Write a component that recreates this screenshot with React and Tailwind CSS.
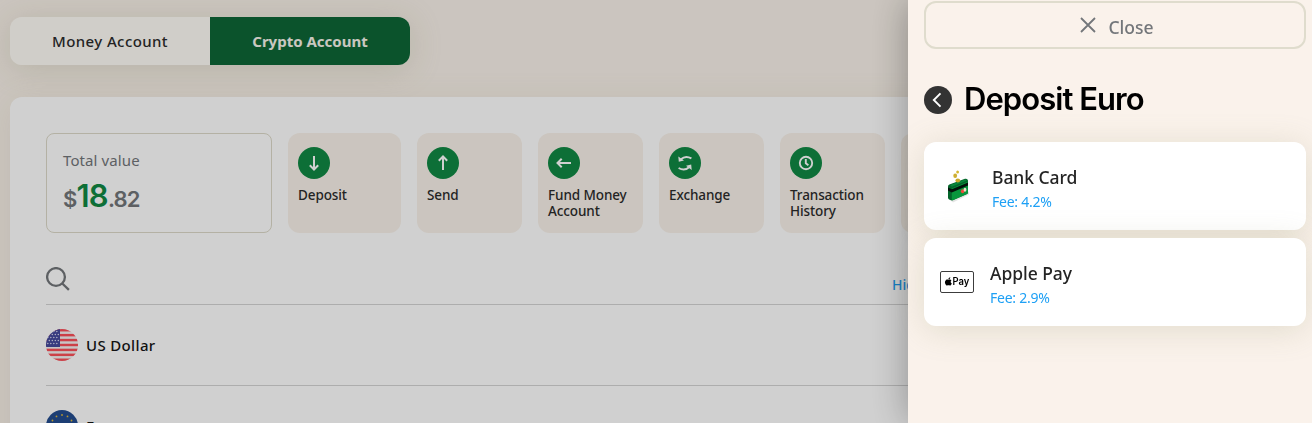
import React from 'react';

const CircleArrow = ({ rotate = '' }) => (
  <svg className={`w-8 h-8 ${rotate}`} viewBox="0 0 32 32" fill="none" stroke="#fff" strokeWidth="2">
    <path d="M16 9v13.5M11.8 18.3l4.2 4.2 4.2-4.2" />
  </svg>
);

const ExchangeIcon = () => (
  <svg className="w-8 h-8" viewBox="0 0 32 32" fill="none" stroke="#fff" strokeWidth="1.9">
    <path d="M12 12.2c2.6-2.4 6.8-2.8 10.4-.8M20 20.2c-2.6 2.4-6.8 2.8-10.4.8" />
    <path d="M9.3 9.4l.5 5.4 5.2-1.2zM22.7 22.9l-.5-5.4-5.2 1.2z" fill="#fff" stroke="none" />
  </svg>
);

const ClockIcon = () => (
  <svg className="w-8 h-8" viewBox="0 0 32 32" fill="none" stroke="#fff" strokeWidth="1.9">
    <circle cx="16" cy="16" r="6.2" />
    <path d="M15.8 12v4.3l2.6 2" />
  </svg>
);

const UsFlag = () => (
  <svg className="w-8 h-8" viewBox="0 0 32 32">
    <clipPath id="us-clip">
      <circle cx="16" cy="16" r="16" />
    </clipPath>
    <g clipPath="url(#us-clip)">
      <rect width="32" height="32" fill="#f4f2f2" />
      {[0, 1, 2, 3, 4, 5, 6].map((i) => (
        <rect key={i} y={i * 4.92} width="32" height="2.46" fill="#fb4f59" />
      ))}
      <rect width="14" height="18" fill="#454a9c" />
      {[2, 5, 8, 11, 14].map((y, row) =>
        [1, 4, 7, 10].map((x) => (
          <circle key={`${x}-${y}`} cx={x + (row % 2) * 1.5 + 0.8} cy={y + 0.6} r="0.75" fill="#d9daf0" />
        ))
      )}
    </g>
  </svg>
);

const EuFlag = () => (
  <svg className="w-8 h-8" viewBox="0 0 32 32">
    <circle cx="16" cy="16" r="16" fill="#234d8f" />
    {Array.from({ length: 12 }, (_, i) => {
      const angle = (i * Math.PI) / 6;
      return (
        <circle key={i} cx={16 + 11 * Math.sin(angle)} cy={16 - 11 * Math.cos(angle)} r="0.9" fill="#e0b93a" />
      );
    })}
  </svg>
);

const BankCardIcon = () => (
  <svg className="w-[36px] h-[36px]" viewBox="0 0 36 36">
    <path d="M10 32l3 2.5 16-8v-3z" fill="#000" opacity=".1" />
    <ellipse cx="17.6" cy="4" rx="1.4" ry="1.5" fill="#d5b62e" />
    <ellipse cx="15.2" cy="7.8" rx="1.9" ry="2.2" fill="#cdae31" />
    <path d="M8 18.6q0-1.4 1.4-2L25 10.8q2.4-.6 3 1.4v12.4q0 1-1 1.5L12 32.4q-3.8-.2-4-2.6z" fill="#04652a" />
    <path d="M11.8 20.6L28 13.6v11q0 .9-.9 1.4L13 32.2q-1.2.3-1.2-.9z" fill="#08963c" />
    <path d="M10 17l15-5.6 2 1.2-15.2 6.2z" fill="#08863a" />
    <ellipse cx="17.8" cy="12.6" rx="2.4" ry="2" fill="#c7a92c" />
    <path d="M8 19.4l3.8 1.8L28 14.4v3.1l-16.2 7-3.8-2z" fill="#03120a" />
    <ellipse cx="22.6" cy="23.2" rx="1.7" ry="2" fill="#ef4938" />
    <ellipse cx="25" cy="21.8" rx="1.4" ry="2" fill="#ecdcca" />
  </svg>
);

const ApplePayIcon = () => (
  <svg className="w-[34px] h-[22px]" viewBox="0 0 34 22">
    <rect x=".5" y=".5" width="33" height="21" rx="1.5" fill="#fff" stroke="#3c3c3c" />
    <path
      d="M10.9 9c-.8-.6-1.8-.4-2.4-.1-.6-.3-1.7-.5-2.5.1-1.7 1.2-1.2 4 .2 5.2.8.7 1.5.1 2.3.1s1.5.6 2.3-.1c.5-.5.8-1 1-1.6-1.4-.7-1.5-2.6-.2-3.3-.2-.1-.4-.2-.7-.3zM8.4 8.4c0-1.2.8-2.1 1.9-2.2.1 1.2-.8 2.2-1.9 2.2z"
      fill="#000"
    />
    <text x="12.4" y="14.4" fontFamily="Inter, sans-serif" fontSize="9.8" fontWeight="600" textLength="16.8" lengthAdjust="spacingAndGlyphs">
      Pay
    </text>
  </svg>
);

const actions = [
  { label: 'Deposit', icon: <CircleArrow />, width: 'w-[113px]' },
  { label: 'Send', icon: <CircleArrow rotate="rotate-180" />, width: 'w-[105px]' },
  { label: 'Fund Money Account', icon: <CircleArrow rotate="rotate-90" />, width: 'w-[105px]' },
  { label: 'Exchange', icon: <ExchangeIcon />, width: 'w-[105px]' },
  { label: 'Transaction History', icon: <ClockIcon />, width: 'w-[105px]' },
];

const ActionTile = ({ label, icon, width }) => (
  <button className={`flex flex-col items-start h-[100px] shrink-0 rounded-xl bg-[#f9f2ea] px-2.5 pt-3.5 text-left ${width}`}>
    <span className="w-8 h-8 rounded-full bg-[#118944]">{icon}</span>
    <span className="mt-2 text-[13.5px] leading-4 font-medium tracking-[-0.1px] text-[#2c2c2c]">{label}</span>
  </button>
);

const CurrencyRow = ({ flag, name }) => (
  <div className="flex items-center gap-2 h-[81px] border-b border-[#d4d4d4]">
    {flag}
    <span className="text-[15px] font-medium tracking-[0.35px] text-[#161616]">{name}</span>
  </div>
);

const Wallet = () => (
  <div className="h-full w-[1312px] pt-[17px] pl-2.5">
    <div className="flex w-[400px] h-12 rounded-xl overflow-hidden shadow-[0_4px_32px_rgba(150,150,110,0.24)] text-[15px]">
      <button className="w-[200px] bg-[#fffdf7] font-medium tracking-[0.4px] text-[#2c2c2c]">Money Account</button>
      <button className="w-[200px] bg-[#0e6637] font-bold text-[#f8f5ec]">Crypto Account</button>
    </div>

    <div className="mt-8 h-[500px] rounded-xl bg-white p-9 shadow-[0_4px_32px_rgba(150,150,110,0.12)]">
      <div className="flex gap-4">
        <div className="w-[226px] h-[100px] shrink-0 rounded-lg border border-[#dddac9] px-4 pt-4">
          <p className="text-[15px] leading-5 tracking-[0.1px] text-[#73767a]">Total value</p>
          <p className="mt-2 font-[Inter] text-[22px] leading-9 font-semibold tracking-[-0.8px] text-[#73767a]">
            $<span className="text-[31px] text-[#118944]">18</span>.82
          </p>
        </div>
        {actions.map((action) => (
          <ActionTile key={action.label} {...action} />
        ))}
        <div className="h-[100px] w-[105px] shrink-0 rounded-xl bg-[#f9f2ea]" />
      </div>

      <div className="flex justify-between h-[72px] border-b border-[#d4d4d4] pt-[34px]">
        <svg className="w-6 h-6" viewBox="0 0 24 24" fill="none" stroke="#73767a" strokeWidth="2.3">
          <circle cx="10" cy="10" r="8.9" />
          <path d="M16.3 16.5l6.6 6.3" />
        </svg>
        <span className="w-[384px] pt-1.5 text-[14px] leading-6 font-medium text-[#1e9cf0]">Hide</span>
      </div>

      <CurrencyRow flag={<UsFlag />} name="US Dollar" />
      <CurrencyRow flag={<EuFlag />} name="Euro" />
    </div>
  </div>
);

const methods = [
  { name: 'Bank Card', fee: '4.2%', icon: <BankCardIcon /> },
  { name: 'Apple Pay', fee: '2.9%', icon: <ApplePayIcon /> },
];

const MethodCard = ({ name, fee, icon }) => (
  <button className="flex items-center gap-4 h-[88px] w-full rounded-xl bg-white px-4 text-left shadow-[0_4px_32px_rgba(150,150,110,0.24)]">
    {icon}
    <span className="flex flex-col pt-[7px]">
      <span className="text-[17.5px] leading-6 font-medium tracking-[-0.05px] text-[#242424]">{name}</span>
      <span className="mt-px text-[14px] leading-6 tracking-[-0.25px] text-[#1ea0f5]">Fee: {fee}</span>
    </span>
  </button>
);

const DepositDrawer = () => (
  <aside className="fixed inset-y-0 right-0 w-[404px] bg-[#faf2eb] pt-px pl-4 pr-1.5 shadow-[0_0_36px_rgba(0,0,0,0.32)]">
    <button className="flex items-center justify-center gap-3 w-full h-12 rounded-xl border-2 border-[#dfdccd] pt-1 pl-1 text-[17.5px] font-medium text-[#73767a]">
      <svg className="w-4 h-4 -mt-1" viewBox="0 0 16 16" fill="none" stroke="currentColor" strokeWidth="1.8">
        <path d="M1 1l14 14M15 1L1 15" />
      </svg>
      Close
    </button>

    <div className="flex items-center gap-3 h-10 mt-[31px]">
      <span className="w-7 h-7 rounded-full bg-[#333]">
        <svg viewBox="0 0 28 28" fill="none" stroke="#fff" strokeWidth="1.9">
          <path d="M16.5 7.3L9.8 14l6.7 6.7" />
        </svg>
      </span>
      <h1 className="pb-0.5 font-[Inter] text-[31px] font-semibold tracking-[-0.95px] text-black">Deposit Euro</h1>
    </div>

    <div className="flex flex-col gap-2 mt-[22px]">
      {methods.map((method) => (
        <MethodCard key={method.name} {...method} />
      ))}
    </div>
  </aside>
);

export default function App() {
  return (
    <div className="h-screen overflow-hidden bg-[#f9f2ea] font-['Noto_Sans',sans-serif]">
      <Wallet />
      <div className="fixed inset-0 bg-black/[0.185]" />
      <DepositDrawer />
    </div>
  );
}
